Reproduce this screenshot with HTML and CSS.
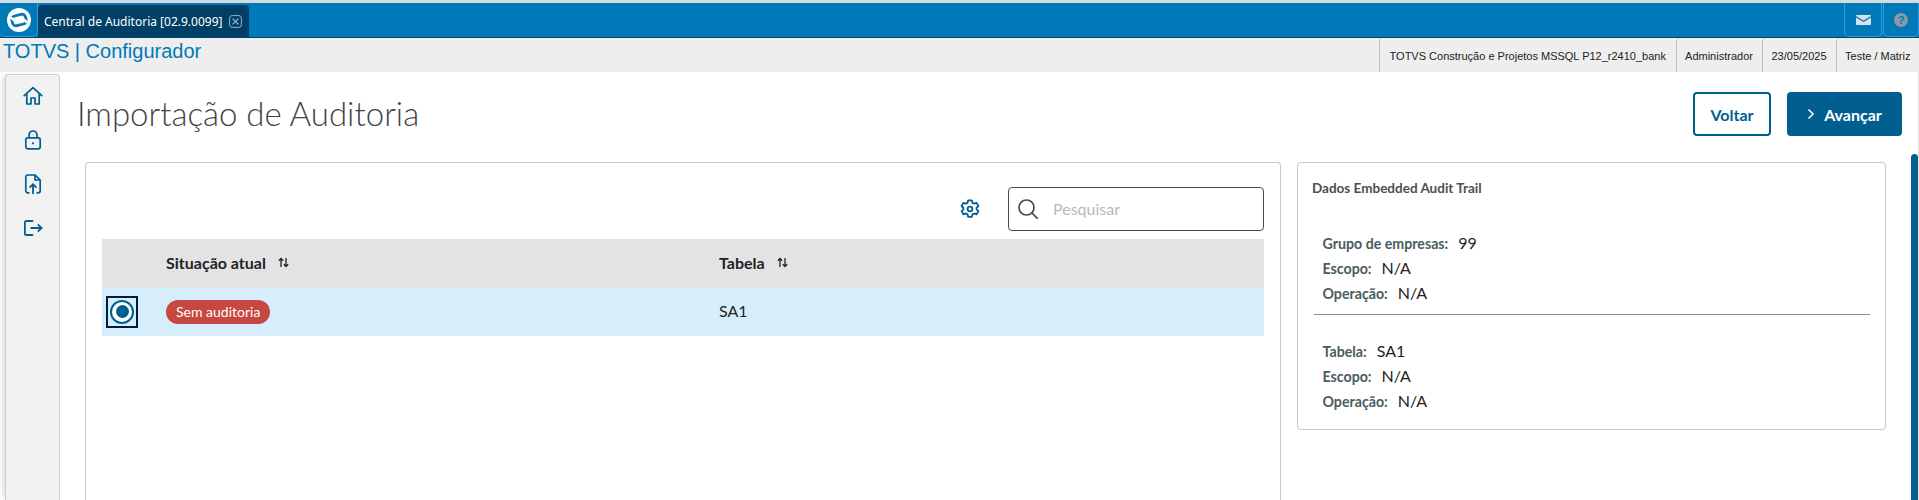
FILE: index.html
```html
<!DOCTYPE html>
<html lang="pt-BR">
<head>
<meta charset="utf-8">
<title>Central de Auditoria</title>
<link rel="stylesheet" href="styles.css">
</head>
<body>
<div class="topbar">
  <div class="logo-cell">
    <svg class="logo" viewBox="0 0 24 24"><circle cx="12" cy="12" r="12" fill="#fff"/><rect x="5" y="7" width="14" height="10" rx="3.500" transform="rotate(-14 12 12)" fill="none" stroke="#0079b8" stroke-width="2.800"/><path d="M3.800 9.500 7.500 12.500M20.200 14.500 16.500 11.500" stroke="#fff" stroke-width="2.400"/></svg>
  </div>
  <div class="tab">
    <span class="tab-label">Central de Auditoria [02.9.0099]</span>
    <svg class="tab-close" viewBox="0 0 13 13"><rect x=".6" y=".6" width="11.8" height="11.8" rx="2.5" fill="none" stroke="#9fb4c2"/><path d="M3.6 3.6l5.8 5.8M9.4 3.6l-5.8 5.8" stroke="#9fb4c2" stroke-width="1.3"/></svg>
  </div>
  <div class="top-spacer"></div>
  <div class="top-btn mail-btn">
    <svg class="mail" viewBox="0 0 15 10"><path d="M1 0h13a1 1 0 0 1 1 1L7.500 5.400 0 1a1 1 0 0 1 1-1z" fill="#d7e3ea"/><path d="M0 2.600l7.500 4.300L15 2.600V9a1 1 0 0 1-1 1H1a1 1 0 0 1-1-1z" fill="#d7e3ea"/></svg>
  </div>
  <div class="top-btn help-btn"><span class="help">?</span></div>
</div>
<div class="infobar">
  <div class="brand">TOTVS | Configurador</div>
  <div class="info-cell info-company">TOTVS Construção e Projetos MSSQL P12_r2410_bank</div>
  <div class="info-cell info-user">Administrador</div>
  <div class="info-cell info-date">23/05/2025</div>
  <div class="info-cell info-branch">Teste / Matriz</div>
</div>
<div class="main">
  <nav class="sidebar">
    <svg class="nav-icon" viewBox="0 0 20 20"><path d="M1.200 9.600 10 1.600l8.800 8M3.800 8v10h4.200v-6h4v6h4.200V8" fill="none" stroke="#005f8f" stroke-width="1.700" stroke-linejoin="round" stroke-linecap="round"/></svg>
    <svg class="nav-icon" viewBox="0 0 20 20"><rect x="2.800" y="7.800" width="14.400" height="11" rx="2" fill="none" stroke="#005f8f" stroke-width="1.700"/><path d="M6 7.800V5a4 4 0 0 1 8 0v2.800" fill="none" stroke="#005f8f" stroke-width="1.700"/><circle cx="10" cy="13.300" r="1.100" fill="#005f8f"/></svg>
    <svg class="nav-icon" viewBox="0 0 20 20"><path d="M6.500 18.800H4.800a2 2 0 0 1-2-2V3a2 2 0 0 1 2-2h7.400l5 5v10.800a2 2 0 0 1-2 2h-1.700M12 1v5h5.200" fill="none" stroke="#005f8f" stroke-width="1.700" stroke-linejoin="round"/><path d="M10 20V10.500M6.600 13.600 10 10.200l3.400 3.400" fill="none" stroke="#005f8f" stroke-width="1.800"/></svg>
    <svg class="nav-icon" viewBox="0 0 20 20"><path d="M9.500 3H3.500a1.600 1.600 0 0 0-1.600 1.600v10.800A1.600 1.600 0 0 0 3.500 17h6" fill="none" stroke="#005f8f" stroke-width="1.800" stroke-linecap="round"/><path d="M7.500 10h11M14.800 6.300 18.600 10l-3.800 3.700" fill="none" stroke="#005f8f" stroke-width="1.800"/></svg>
  </nav>
  <div class="content">
    <header class="page-head">
      <h1 class="page-title">Importação de Auditoria</h1>
      <div class="actions">
        <button class="btn btn-ghost">Voltar</button>
        <button class="btn btn-primary"><svg class="chev" viewBox="0 0 8 12"><path d="M1.500 1.500 6 6l-4.500 4.500" fill="none" stroke="#fff" stroke-width="1.500"/></svg>Avançar</button>
      </div>
    </header>
    <div class="panels">
      <section class="card card-table">
        <div class="toolbar">
          <svg class="gear" viewBox="0 0 24 24"><path d="M10 2.500h4l.7 2.800 1.800.9 2.700-.9 2 3.400-2.100 2 .1 1.800 2 1.800-2 3.500-2.700-.9-1.800 1-.7 2.700h-4l-.7-2.700-1.800-1-2.700.9-2-3.500 2-1.800.1-1.800-2.100-2 2-3.400 2.700.9 1.800-.9z" fill="none" stroke="#005f8f" stroke-width="2" stroke-linejoin="round"/><circle cx="12" cy="12" r="2.600" fill="none" stroke="#005f8f" stroke-width="2"/></svg>
          <div class="search">
            <svg class="search-icon" viewBox="0 0 20 20"><circle cx="8.500" cy="8.500" r="7.500" fill="none" stroke="#4a4a4a" stroke-width="1.700"/><path d="M13.800 13.800 20 20" stroke="#4a4a4a" stroke-width="1.700"/></svg>
            <span class="placeholder">Pesquisar</span>
          </div>
        </div>
        <div class="table-head">
          <div class="col col-radio"></div>
          <div class="col col-status th">Situação atual
            <svg class="sort" viewBox="0 0 11 11"><path d="M3 10V1.500M.8 3.700 3 1.500l2.200 2.200M8 1v8.500M5.800 7.300 8 9.500l2.200-2.200" fill="none" stroke="#1d2426" stroke-width="1.300"/></svg>
          </div>
          <div class="col th">Tabela
            <svg class="sort" viewBox="0 0 11 11"><path d="M3 10V1.500M.8 3.700 3 1.500l2.200 2.200M8 1v8.500M5.800 7.300 8 9.500l2.200-2.200" fill="none" stroke="#1d2426" stroke-width="1.300"/></svg>
          </div>
        </div>
        <div class="table-row">
          <div class="col col-radio"><span class="radio-focus"><span class="radio"><span class="radio-dot"></span></span></span></div>
          <div class="col col-status"><span class="badge">Sem auditoria</span></div>
          <div class="col cell">SA1</div>
        </div>
      </section>
      <aside class="card card-info">
        <h2 class="info-title">Dados Embedded Audit Trail</h2>
        <dl class="info-group">
          <div class="info-line"><dt>Grupo de empresas:</dt><dd>99</dd></div>
          <div class="info-line"><dt>Escopo:</dt><dd>N/A</dd></div>
          <div class="info-line"><dt>Operação:</dt><dd>N/A</dd></div>
        </dl>
        <hr class="divider">
        <dl class="info-group">
          <div class="info-line"><dt>Tabela:</dt><dd>SA1</dd></div>
          <div class="info-line"><dt>Escopo:</dt><dd>N/A</dd></div>
          <div class="info-line"><dt>Operação:</dt><dd>N/A</dd></div>
        </dl>
      </aside>
    </div>
  </div>
  <div class="scroll-track"><div class="scroll-thumb"></div></div>
</div>
</body>
</html>
```
FILE: styles.css
```css
* { box-sizing: border-box; }
html, body { margin: 0; padding: 0; height: 500px; overflow: hidden; background: #fff; }
body { font-family: Lato, sans-serif; color: #1d2426; display: flex; flex-direction: column; }

.topbar { flex: none; height: 38px; background: #0079b8; border-top: 3px solid #d4dbe0; border-bottom: 1px solid #00456b; display: flex; align-items: stretch; }
.logo-cell { width: 38px; border: 1px solid #2f9be0; border-top: 0; border-left: 0; border-radius: 0 0 5px 5px; display: flex; align-items: center; justify-content: center; }
.logo { width: 24px; height: 24px; }
.tab { width: 211px; margin-top: 2px; background: #003f66; border-radius: 4px 4px 0 0; display: flex; align-items: center; padding-left: 6px; gap: 7px; font-family: "Noto Sans", sans-serif; }
.tab-label { color: #fff; font-size: 12px; white-space: nowrap; }
.tab-close { width: 13px; height: 13px; }
.top-spacer { flex: 1; }
.top-btn { border: 1px solid #2f9be0; border-top: 0; border-radius: 0 0 5px 5px; display: flex; align-items: center; justify-content: center; }
.mail-btn { width: 38px; margin-right: 1px; }
.help-btn { width: 36px; }
.mail { width: 15px; height: 10px; }
.help { width: 14px; height: 14px; border-radius: 50%; background: #8a9aa5; color: #0079b8; font: bold 11px/14px "Liberation Sans", sans-serif; text-align: center; }

.infobar { flex: none; height: 34px; background: #eeeeee; display: flex; align-items: stretch; font-family: "Liberation Sans", sans-serif; }
.brand { flex: 1; padding-left: 3px; font-size: 20px; line-height: 27px; color: #0079b8; }
.info-cell { font-size: 11px; line-height: 36px; color: #222; border-left: 1px solid #bdbdbd; border-radius: 4px 0 0 0; text-align: center; white-space: nowrap; }
.info-company { width: 296.500px; }
.info-user { width: 86px; }
.info-date { width: 74px; }
.info-branch { width: 83.500px; }

.main { flex: 1; min-height: 0; display: flex; align-items: stretch; border-right: 1px solid #e2e2e2; }
.sidebar { flex: none; width: 55px; margin: 2px 0 0 5px; padding-top: 11px; background: #f2f2f2; border: 1px solid #cfcfcf; border-bottom: 0; border-radius: 4px 4px 0 0; box-shadow: -4px 0 5px -2px rgba(0,0,0,.15); display: flex; flex-direction: column; align-items: center; gap: 24px; }
.nav-icon { width: 20px; height: 20px; flex: none; }

.content { flex: 1; min-width: 0; padding: 0 0 0 17px; }
.page-head { display: flex; justify-content: space-between; height: 90px; padding-top: 20px; padding-right: 9px; }
.page-title { margin: 1px 0 0; font-size: 33px; font-weight: 300; line-height: 40px; color: #3e4448; }
.actions { display: flex; gap: 16px; }
.btn { height: 44px; border-radius: 4px; font-family: inherit; font-size: 16px; font-weight: 700; display: flex; align-items: center; justify-content: center; }
.btn-ghost { width: 78px; background: #fff; border: 2px solid #005f8f; color: #005f8f; }
.btn-primary { width: 115px; padding-left: 6px; background: #005f8f; border: 2px solid #005f8f; color: #fff; gap: 9px; }
.chev { width: 8px; height: 12px; }

.panels { display: flex; align-items: flex-start; gap: 16px; padding-left: 8px; padding-right: 25px; }
.card { flex: none; background: #fff; border: 1px solid #c9c9c9; border-radius: 4px; }
.card-table { width: 1196px; height: 338px; padding: 24px 16px 0; border-bottom: 0; border-radius: 4px 4px 0 0; }
.toolbar { display: flex; align-items: center; justify-content: flex-end; gap: 27px; height: 44px; margin-bottom: 8px; }
.gear { width: 22px; height: 22px; }
.search { width: 256px; height: 44px; border: 1px solid #4a4a4a; border-radius: 4px; display: flex; align-items: center; padding-left: 9px; gap: 15px; }
.search-icon { width: 20px; height: 20px; }
.placeholder { font-size: 16px; color: #b9b9b9; padding-bottom: 1px; }

.table-head, .table-row { display: flex; align-items: center; }
.table-head { height: 48px; background: #e3e3e3; }
.table-row { height: 49px; background: #d6eefb; }
.col { display: flex; align-items: center; }
.col-radio { width: 64px; padding-left: 4px; }
.col-status { width: 553px; }
.th { font-size: 16px; font-weight: 700; gap: 12px; padding-bottom: 2px; }
.sort { width: 11px; height: 11px; }
.cell { font-size: 16px; padding-bottom: 2px; }
.radio-focus { width: 32px; height: 32px; border: 2px solid #001f36; display: flex; align-items: center; justify-content: center; }
.radio { width: 24px; height: 24px; border-radius: 50%; border: 2.500px solid #005f8f; background: #fff; display: flex; align-items: center; justify-content: center; }
.radio-dot { width: 13px; height: 13px; border-radius: 50%; background: #005f8f; }
.badge { height: 24px; padding: 0 10px; border-radius: 12px; background: #c64840; color: #fff; font-size: 14px; line-height: 24px; }

.card-info { width: 589px; height: 268px; padding: 16px 15px 0 14px; }
.info-title { margin: 0 0 32.500px; font-size: 13.500px; font-weight: 700; line-height: 18px; color: #4a5054; }
.info-group { margin: 0; padding-left: 10.500px; }
.info-line { display: flex; align-items: baseline; gap: 10px; height: 25px; line-height: 25px; }
.info-line dt { font-size: 14.200px; font-weight: 700; color: #4a5c60; }
.info-line dd { margin: 0; font-size: 16px; color: #1d2426; }
.divider { margin: 9px 0 23px 2px; width: 556px; border: 0; border-top: 1px solid #8f8f8f; }

.scroll-track { flex: none; width: 7px; padding-top: 82px; }
.scroll-thumb { height: 100%; background: #005f8f; border-radius: 4px 4px 0 0; }
```
